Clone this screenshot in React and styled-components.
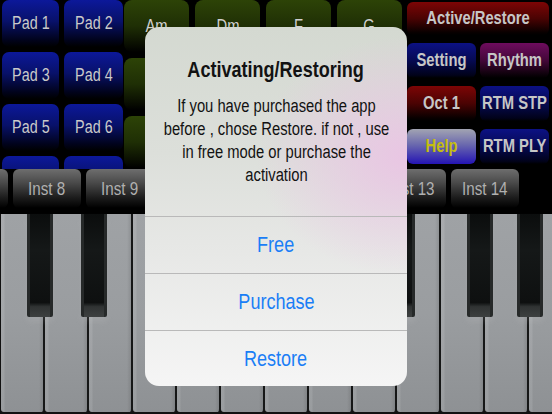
import React from "react";
import styled, { createGlobalStyle } from "styled-components";

const GlobalStyle = createGlobalStyle`
  html, body { margin: 0; padding: 0; background: #000; }
  body { font-family: "Liberation Sans", Arial, sans-serif; }
  * { box-sizing: border-box; }
`;

const Screen = styled.div`
  position: relative;
  width: 552px;
  height: 414px;
  overflow: hidden;
  background: #000;
  font-family: "Liberation Sans", Arial, sans-serif;
`;

/* condensed rendering of the app's narrow type */
const Label = styled.span`
  display: inline-block;
  white-space: nowrap;
  transform: scaleX(0.82);
`;

const TopArea = styled.div`
  display: flex;
  height: 169px;
  overflow: hidden;
  padding-left: 2px;
`;

const PadGrid = styled.div`
  display: grid;
  grid-template-columns: 57px 59px;
  grid-auto-rows: 47px;
  gap: 5px;
`;

const Pad = styled.div`
  display: flex;
  align-items: center;
  justify-content: center;
  border-radius: 7px;
  background: linear-gradient(to bottom, #0c189a 0%, #08116a 45%, #01031c 85%, #000 100%);
  color: #cacaca;
  font-size: 17.5px;
`;

const ChordGrid = styled.div`
  display: grid;
  grid-template-columns: repeat(4, 65px);
  grid-auto-rows: 52px;
  column-gap: 6px;
  row-gap: 6px;
  margin-left: 1px;
`;

const Chord = styled.div`
  display: flex;
  align-items: center;
  justify-content: center;
  border-radius: 8px;
  background: linear-gradient(to bottom, #2d4307 0%, #1f2f05 50%, #070a01 90%, #000 100%);
  color: #d0d0d0;
  font-size: 18px;
`;

const Panel = styled.div`
  display: flex;
  flex-direction: column;
  width: 142px;
  margin-left: 5px;
  padding-top: 2px;
  gap: 8px;
`;

const PanelGrid = styled.div`
  display: grid;
  grid-template-columns: 69px 69px;
  grid-auto-rows: 35px;
  column-gap: 4px;
  row-gap: 8px;
`;

const tones = {
  red: "linear-gradient(to bottom, #7d0505 0%, #4a0303 50%, #080000 92%, #000 100%)",
  blue: "linear-gradient(to bottom, #0c1184 0%, #060a52 50%, #01021a 92%, #000 100%)",
  purple: "linear-gradient(to bottom, #6e0c5e 0%, #430738 50%, #0a0108 92%, #000 100%)",
  help: "linear-gradient(to bottom, #a2a4b2 0%, #6a68ae 45%, #2414b4 100%)",
};

const CtrlButton = styled.div`
  display: flex;
  align-items: center;
  justify-content: center;
  height: ${(p) => (p.$tall ? "33px" : "auto")};
  border-radius: 6px;
  background: ${(p) => tones[p.$tone]};
  color: ${(p) => (p.$tone === "help" ? "#c4be0e" : "#c6c6c6")};
  font-size: 18px;
  font-weight: 700;
`;

const InstRow = styled.div`
  display: flex;
  gap: 5px;
  height: 45px;
  margin-left: -60px;
  background: #000;
`;

const InstButton = styled.div`
  flex: 0 0 68px;
  height: 39px;
  display: flex;
  align-items: center;
  justify-content: center;
  border-radius: 6px;
  background: linear-gradient(to bottom, #6e6e6e 0%, #4a4a4a 35%, #1a1a1a 75%, #000 100%);
  color: #b0b0b0;
  font-size: 18.5px;
`;

const Piano = styled.div`
  position: relative;
  display: flex;
  height: 200px;
  padding-left: 1px;
  background: #111;
`;

const WhiteKey = styled.div`
  flex: 0 0 44px;
  height: 198px;
  border-right: 2px solid #161717;
  border-radius: 0 0 3px 3px;
  background:
    linear-gradient(to right, rgba(255,255,255,0.10) 0px, rgba(255,255,255,0.10) 3px, transparent 4px, transparent 38px, rgba(0,0,0,0.10) 42px),
    linear-gradient(to bottom, #9fa2a5 0%, #9a9da0 50%, #8e9194 100%);
`;

const BlackKey = styled.div`
  position: absolute;
  top: 0;
  width: 26px;
  height: 103px;
  border-radius: 0 0 2px 2px;
  background: linear-gradient(to bottom, #0b0d0d 0%, #151818 35%, #0e1010 86%, #303333 90%, #3d4040 100%);
  border-left: 3px solid #262929;
  border-right: 3px solid #262929;
  box-shadow: 0 5px 6px rgba(210, 210, 210, 0.12);
`;

const Overlay = styled.div`
  position: absolute;
  left: 145px;
  top: 27px;
  width: 262px;
  height: 359px;
  border-radius: 14px;
  overflow: hidden;
  display: flex;
  flex-direction: column;
  background:
    radial-gradient(ellipse 150px 120px at 100% 36%, rgba(234, 196, 228, 0.95), rgba(234, 196, 228, 0) 100%),
    linear-gradient(to bottom, #d4d9d1 0%, #dcdfda 35%, #e6e7e5 60%, #f5f5f5 100%);
`;

const AlertHead = styled.div`
  padding: 31px 14px 0;
  height: 189px;
  text-align: center;
  color: #121212;
`;

const AlertTitle = styled.div`
  font-size: 22px;
  font-weight: 700;
  line-height: 24px;
`;

const AlertMessage = styled.div`
  width: 285px;
  margin: 13px 0 0 -25.5px;
  transform: scaleX(0.82);
  font-size: 18px;
  line-height: 23px;
`;

const AlertAction = styled.div`
  height: ${(p) => (p.$last ? "56px" : "57px")};
  display: flex;
  align-items: center;
  justify-content: center;
  border-top: 1px solid #b9b9b9;
  color: #1a7ef6;
  font-size: 22px;
`;

const pads = ["Pad 1", "Pad 2", "Pad 3", "Pad 4", "Pad 5", "Pad 6", "", ""];
const chords = ["Am", "Dm", "F", "G", "", "", "", "", "", "", "", ""];
const insts = [
  { n: 7, show: false }, { n: 8, show: true }, { n: 9, show: true }, { n: 10, show: false },
  { n: 11, show: false }, { n: 12, show: false }, { n: 13, show: true }, { n: 14, show: true },
];

const blackKeys = [
  { k: 1, o: -5 }, { k: 2, o: 5 }, { k: 4, o: -5 }, { k: 5, o: 1 }, { k: 6, o: 5 },
  { k: 8, o: -5 }, { k: 9, o: 5 }, { k: 11, o: -5 }, { k: 12, o: 1 },
];

export default function App() {
  return (
    <>
      <GlobalStyle />
      <Screen>
        <TopArea>
          <PadGrid>
            {pads.map((p, i) => (
              <Pad key={i}>{p && <Label>{p}</Label>}</Pad>
            ))}
          </PadGrid>
          <ChordGrid>
            {chords.map((c, i) => (
              <Chord key={i}>{c && <Label>{c}</Label>}</Chord>
            ))}
          </ChordGrid>
          <Panel>
            <CtrlButton $tone="red" $tall><Label>Active/Restore</Label></CtrlButton>
            <PanelGrid>
              <CtrlButton $tone="blue"><Label>Setting</Label></CtrlButton>
              <CtrlButton $tone="purple"><Label>Rhythm</Label></CtrlButton>
              <CtrlButton $tone="red"><Label>Oct 1</Label></CtrlButton>
              <CtrlButton $tone="blue"><Label>RTM STP</Label></CtrlButton>
              <CtrlButton $tone="help"><Label>Help</Label></CtrlButton>
              <CtrlButton $tone="blue"><Label>RTM PLY</Label></CtrlButton>
            </PanelGrid>
          </Panel>
        </TopArea>
        <InstRow>
          {insts.map(({ n, show }) => (
            <InstButton key={n}>{show && <Label>Inst {n}</Label>}</InstButton>
          ))}
        </InstRow>
        <Piano>
          {Array.from({ length: 13 }).map((_, i) => (
            <WhiteKey key={i} />
          ))}
          {blackKeys.map(({ k, o }) => (
            <BlackKey key={k} style={{ left: 1 + 44 * k + o - 13 }} />
          ))}
        </Piano>
        <Overlay>
          <AlertHead>
            <AlertTitle>
              <Label>Activating/Restoring</Label>
            </AlertTitle>
            <AlertMessage>
              If you have purchased the app before , chose Restore. if not , use in free mode or purchase the activation
            </AlertMessage>
          </AlertHead>
          <AlertAction><Label>Free</Label></AlertAction>
          <AlertAction><Label>Purchase</Label></AlertAction>
          <AlertAction $last><Label>Restore</Label></AlertAction>
        </Overlay>
      </Screen>
    </>
  );
}
